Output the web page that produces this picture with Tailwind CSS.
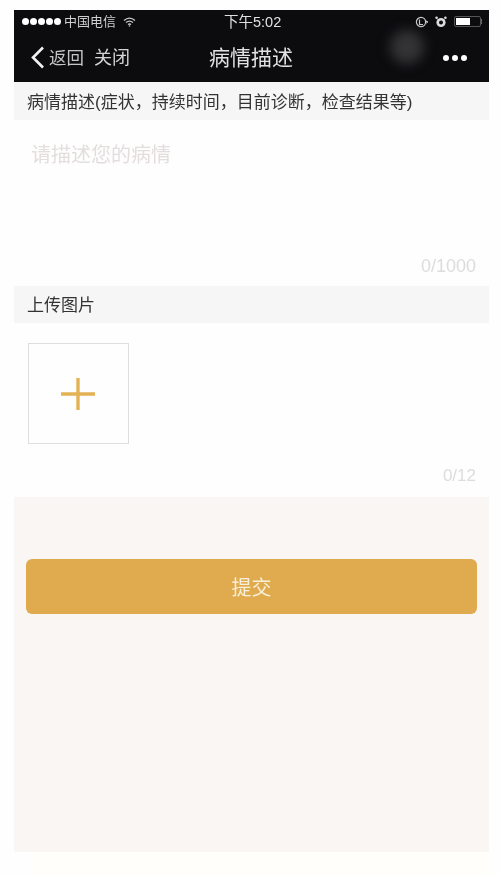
<!DOCTYPE html>
<html lang="zh-CN">
<head>
  <meta charset="UTF-8" />
  <title>病情描述</title>
  <script src="https://cdn.jsdelivr.net/npm/@tailwindcss/browser@4"></script>
</head>
<body class="bg-[#fefefe] font-['Liberation_Sans','Noto_Sans_CJK_SC',sans-serif] overflow-hidden">
  <div class="w-[500px] h-[875px] pt-[10px] pl-[14px] pr-[11px] flex flex-col">

    <!-- 顶部黑色区域 -->
    <header class="relative h-[72px] shrink-0 bg-[#0c0b0e] text-white blur-[0.5px]">
      <div class="h-[23px] flex items-center justify-between pl-[8px] pr-[7px] text-[13px] relative">
        <div class="flex items-center gap-[3px]">
          <span class="flex gap-[1px]">
            <i class="w-[7px] h-[7px] rounded-full bg-white"></i>
            <i class="w-[7px] h-[7px] rounded-full bg-white"></i>
            <i class="w-[7px] h-[7px] rounded-full bg-white"></i>
            <i class="w-[7px] h-[7px] rounded-full bg-white"></i>
            <i class="w-[7px] h-[7px] rounded-full bg-white"></i>
          </span>
          <span class="text-[#d0d0d0]">中国电信</span>
          <svg class="ml-[4px]" width="13" height="10" viewBox="0 0 13 10" fill="none" stroke="#ccc" stroke-width="1.3">
            <path d="M1 3.5C4.5 0.5 8.5 0.5 12 3.5" />
            <path d="M3 5.6C5.2 3.8 7.8 3.8 10 5.6" />
            <path d="M5 7.6C5.9 6.9 7.1 6.9 8 7.6" />
            <circle cx="6.5" cy="9" r="0.8" fill="#ccc" stroke="none" />
          </svg>
        </div>
        <span class="absolute left-[210px] top-[3px] text-[14.5px] leading-[18px] text-[#e0e0e0]">下午5:02</span>
        <div class="flex items-center gap-[7px]">
          <svg width="13" height="12" viewBox="0 0 13 12" fill="none" stroke="#ccc" stroke-width="1.2">
            <circle cx="6" cy="6" r="4.6" />
            <path d="M4.5 3.5V8.5H8" />
            <path d="M11 5L12.5 6L11 7" />
          </svg>
          <svg width="12" height="12" viewBox="0 0 12 12" fill="#ddd">
            <circle cx="6" cy="6.5" r="4.6" />
            <circle cx="6" cy="6.5" r="2" fill="#0c0b0e" />
            <circle cx="1.6" cy="1.8" r="1.3" />
            <circle cx="10.4" cy="1.8" r="1.3" />
          </svg>
          <div class="flex items-center">
            <div class="w-[27px] h-[11px] rounded-[2px] border border-[#555] p-[1px]">
              <div class="w-[14px] h-full bg-white"></div>
            </div>
            <i class="w-[1.5px] h-[5px] bg-[#666]"></i>
          </div>
        </div>
      </div>

      <div class="relative h-[49px] flex items-center justify-between pl-[16px] pr-[22px]">
        <div class="flex items-center">
          <svg width="15" height="23" viewBox="0 0 15 23" fill="none" stroke="#f2f2f2" stroke-width="2.6">
            <path d="M13 1.5L3 11.5L13 21.5" />
          </svg>
          <span class="ml-[4px] pt-[2px] text-[17.5px] text-[#c4c4c4]">返回</span>
          <span class="ml-[10px] pt-[2px] text-[18px] text-[#d4d4d4]">关闭</span>
        </div>
        <h1 class="absolute left-[195px] text-[21px] leading-[28px] text-[#e2e2e2]">病情描述</h1>
        <div class="flex gap-[3px]">
          <i class="w-[6px] h-[6px] rounded-full bg-white"></i>
          <i class="w-[6px] h-[6px] rounded-full bg-white"></i>
          <i class="w-[6px] h-[6px] rounded-full bg-white"></i>
        </div>
      </div>

      <!-- 模糊圆点 -->
      <div class="absolute left-[376px] top-[20px] w-[34px] h-[34px] rounded-full bg-[#333335] blur-[6px]"></div>
    </header>

    <!-- 病情描述 -->
    <div class="h-[38px] shrink-0 bg-[#f7f6f6] pl-[13px] pt-[3px] flex items-center text-[17px] text-[#333] blur-[0.5px] whitespace-nowrap">病情描述(症状，持续时间，目前诊断，检查结果等)</div>
    <div class="h-[166px] shrink-0 flex flex-col justify-between pl-[17px] pr-[13px] pt-[22px] pb-[9px] blur-[0.7px]">
      <p class="text-[20px] leading-[26px] text-[#e3dedd]">请描述您的病情</p>
      <p class="text-right text-[18px] leading-[22px] text-[#dcdcdc]">0/1000</p>
    </div>

    <!-- 上传图片 -->
    <div class="h-[37px] shrink-0 bg-[#f7f6f6] pl-[13px] pt-[2px] flex items-center text-[17px] text-[#333] blur-[0.5px]">上传图片</div>
    <div class="h-[174px] shrink-0 flex flex-col pl-[14px] pr-[13px] pt-[20px] blur-[0.4px]">
      <div class="w-[101px] h-[101px] border border-[#dedede] flex items-center justify-center">
        <svg class="mr-[2px]" width="36" height="34" viewBox="0 0 36 34" fill="none" stroke="#e3b255" stroke-width="3.4">
          <path d="M1 17H35" />
          <path d="M18 1V33" />
        </svg>
      </div>
      <p class="mt-[21px] text-right text-[17px] leading-[22px] text-[#dcdcdc]">0/12</p>
    </div>

    <!-- 提交 -->
    <div class="h-[355px] shrink-0 bg-[#f9f6f3] px-[12px] pt-[62px]">
      <button type="button" class="w-full h-[55px] pt-[2px] rounded-[6px] bg-[#dfab4e] text-[20px] text-[#f8efd8] blur-[0.4px]">提交</button>
    </div>

    <!-- 底部浅黄色条 -->
    <div class="flex-1 ml-[18px] bg-[#fffefa]"></div>
  </div>
</body>
</html>
